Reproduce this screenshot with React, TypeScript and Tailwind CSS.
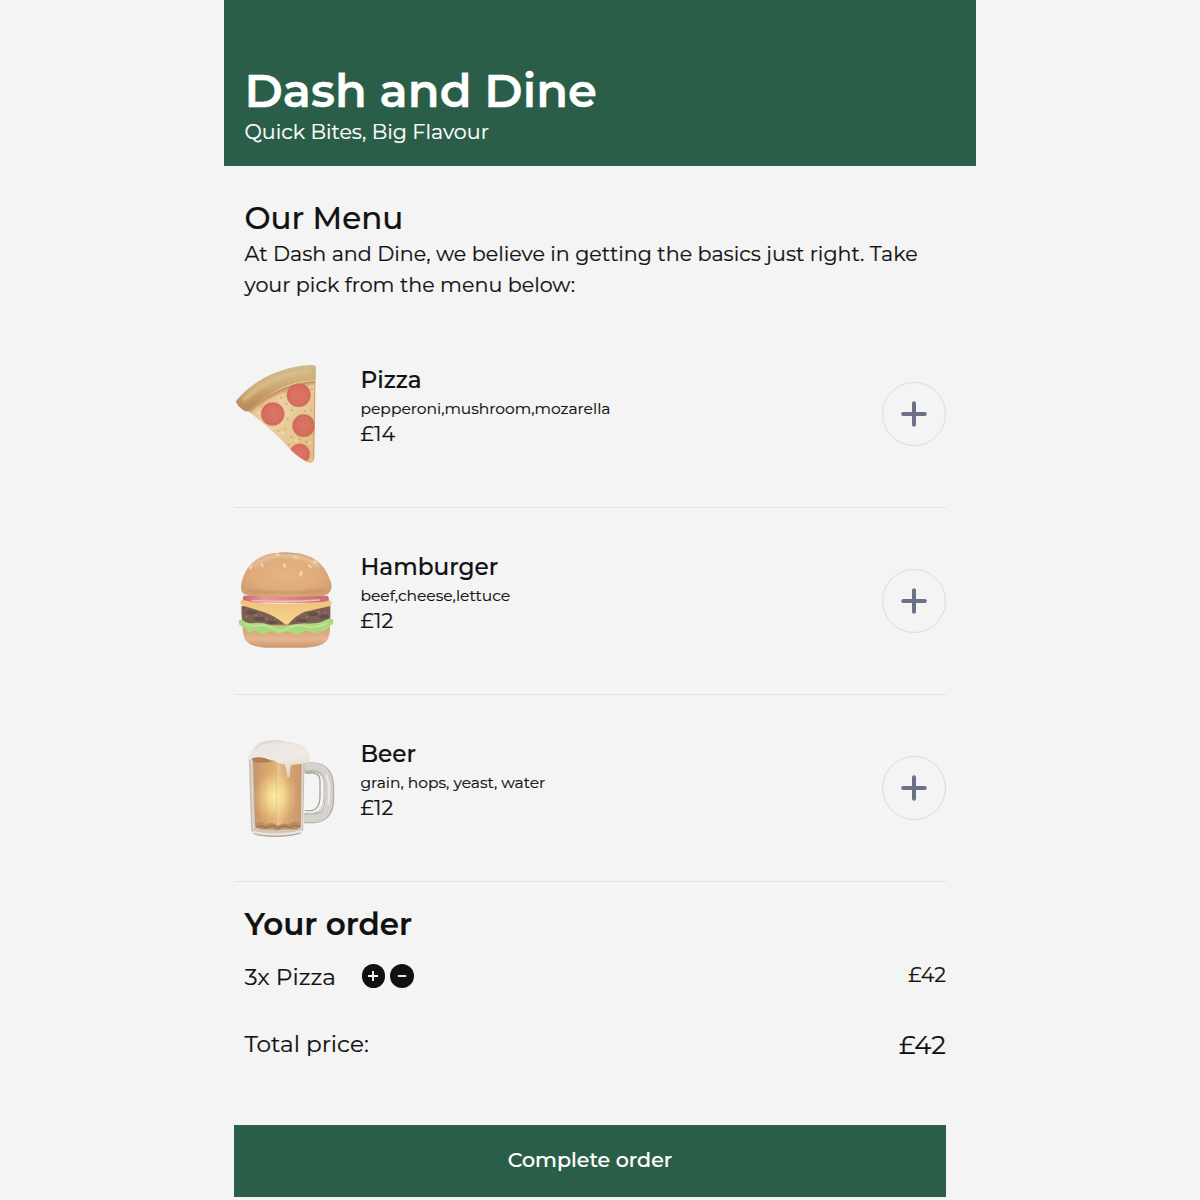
import type { ReactNode } from "react";

function PizzaIcon() {
  return (
    <svg viewBox="27 36 312 312" className="size-[104px] shrink-0" aria-hidden="true">
      <defs>
        <linearGradient id="crust" x1="0.35" y1="0.1" x2="0.52" y2="0.85">
          <stop offset="0" stopColor="#cdb88c" />
          <stop offset="0.4" stopColor="#d2b07a" />
          <stop offset="0.75" stopColor="#c0965f" />
          <stop offset="1" stopColor="#bb8a5b" />
        </linearGradient>
        <linearGradient id="cheese" x1="0" y1="0" x2="1" y2="0.8">
          <stop offset="0" stopColor="#e4c08c" />
          <stop offset="0.5" stopColor="#ebd0a0" />
          <stop offset="1" stopColor="#e2bc83" />
        </linearGradient>
        <radialGradient id="pepperoni">
          <stop offset="0" stopColor="#da7666" />
          <stop offset="0.75" stopColor="#d76e60" />
          <stop offset="1" stopColor="#cb6357" />
        </radialGradient>
        <clipPath id="slice">
          <path d="M70 183C130 126 199 97 271 93L267 327Q264 340 251 337Q220 324 195 297Q150 247 70 183Z" />
        </clipPath>
        <filter id="pizzaSoft"><feGaussianBlur stdDeviation="4" /></filter>
        <filter id="pizzaEdge"><feGaussianBlur stdDeviation="1.8" /></filter>
      </defs>
      <g filter="url(#pizzaEdge)">
        <path d="M66 180C130 124 199 93 272 91L268 327Q265 341 251 338Q220 324 195 297Q150 247 66 180Z" fill="url(#cheese)" />
        <g clipPath="url(#slice)">
          <path d="M62 188C130 126 199 98 276 92" fill="none" stroke="#c38d57" strokeWidth="16" filter="url(#pizzaSoft)" />
          <path d="M271 95L267 328" stroke="#ce9b62" strokeWidth="5" />
          <g fill="url(#pepperoni)" stroke="#dc9a6c" strokeWidth="2">
            <circle cx="221" cy="135" r="36" />
            <circle cx="143" cy="192" r="35" />
            <circle cx="236" cy="227" r="34" />
            <circle cx="224" cy="312" r="31" />
          </g>
          <g fill="#d7a26b">
            <circle cx="178" cy="127" r="3" /><circle cx="169" cy="143" r="3" /><circle cx="185" cy="162" r="3" />
            <circle cx="201" cy="180" r="3" /><circle cx="188" cy="207" r="3" /><circle cx="181" cy="238" r="3" />
            <circle cx="160" cy="242" r="3" /><circle cx="199" cy="260" r="3" /><circle cx="225" cy="268" r="3" />
            <circle cx="245" cy="276" r="3" /><circle cx="259" cy="181" r="3" /><circle cx="240" cy="183" r="3" />
            <circle cx="261" cy="117" r="3" /><circle cx="109" cy="169" r="3" /><circle cx="191" cy="284" r="3" />
          </g>
          <g fill="#eedcb8">
            <circle cx="166" cy="151" r="4" /><circle cx="101" cy="189" r="4" /><circle cx="190" cy="193" r="4" />
            <circle cx="172" cy="250" r="4" /><circle cx="255" cy="279" r="4" /><circle cx="213" cy="271" r="4" />
          </g>
        </g>
        <path d="M35 151C85 91 164 50 257 45Q272 44 273 52L272 91C190 94 130 127 70 184Q61 187 51 178Q37 168 33 157Q32 154 35 151Z" fill="url(#crust)" />
        <path d="M55 151C103 104 173 70 258 62" fill="none" stroke="#d8bf8b" strokeWidth="11" filter="url(#pizzaSoft)" />
      </g>
    </svg>
  );
}

function BurgerIcon() {
  return (
    <svg viewBox="27 27 312 312" className="size-[104px] shrink-0" aria-hidden="true">
      <defs>
        <radialGradient id="bunTop" cx="0.49" cy="0.5" r="0.62">
          <stop offset="0" stopColor="#e4b485" />
          <stop offset="0.6" stopColor="#dfab79" />
          <stop offset="1" stopColor="#d09c6e" />
        </radialGradient>
        <linearGradient id="bunBottom" x1="0" y1="0" x2="0" y2="1">
          <stop offset="0.2" stopColor="#d7a278" />
          <stop offset="0.65" stopColor="#e4b58e" />
          <stop offset="1" stopColor="#c9966e" />
        </linearGradient>
        <linearGradient id="tomato" gradientUnits="userSpaceOnUse" x1="55" y1="0" x2="310" y2="0">
          <stop offset="0" stopColor="#c9686a" />
          <stop offset="0.25" stopColor="#e89a9b" />
          <stop offset="0.6" stopColor="#dc8083" />
          <stop offset="1" stopColor="#cb6b6e" />
        </linearGradient>
        <linearGradient id="cheddar" x1="0" y1="0" x2="0" y2="1">
          <stop offset="0" stopColor="#efc27a" />
          <stop offset="1" stopColor="#f6d58e" />
        </linearGradient>
        <filter id="burgerEdge"><feGaussianBlur stdDeviation="1.8" /></filter>
        <filter id="burgerSoft"><feGaussianBlur stdDeviation="4" /></filter>
      </defs>
      <g filter="url(#burgerEdge)">
        <path d="M53 251H314Q318 285 304 304Q288 322 240 323H128Q76 322 61 300Q52 283 53 251Z" fill="url(#bunBottom)" />
        <path d="M49 199Q100 190 182 196Q270 190 316 199V230Q316 247 302 253L66 255Q50 247 50 230Z" fill="#7b6154" />
        <g fill="#655046">
          <ellipse cx="79" cy="217" rx="17" ry="6" /><ellipse cx="105" cy="237" rx="20" ry="6" />
          <ellipse cx="142" cy="247" rx="15" ry="5" /><ellipse cx="230" cy="242" rx="18" ry="5" />
          <ellipse cx="264" cy="222" rx="16" ry="6" /><ellipse cx="297" cy="230" rx="15" ry="6" />
        </g>
        <g fill="#94765f">
          <circle cx="65" cy="230" r="4" /><circle cx="93" cy="225" r="4" /><circle cx="124" cy="236" r="4" />
          <circle cx="151" cy="240" r="3" /><circle cx="246" cy="231" r="4" /><circle cx="281" cy="216" r="4" />
          <circle cx="302" cy="217" r="3" /><circle cx="221" cy="249" r="4" />
        </g>
        <path d="M43 240Q51 235 61 246Q78 253 93 248Q116 247 132 254Q160 261 183 258Q212 252 240 250Q279 253 302 240Q319 232 323 239Q328 245 323 253Q312 257 307 267Q298 276 283 274Q273 283 258 277Q244 268 232 277Q219 289 205 279Q190 273 177 276Q161 287 147 276Q131 270 122 280Q108 287 97 275Q90 267 81 277Q67 282 60 265Q55 257 45 257Q38 247 43 240Z" fill="#abda7b" />
        <path d="M60 251Q83 261 101 257T145 266T191 265T242 259T304 250" fill="none" stroke="#bfe697" strokeWidth="5" />
        <path d="M56 167Q180 157 307 167Q314 172 311 188H57Q51 178 56 167Z" fill="url(#tomato)" />
        <path d="M80 181Q180 187 285 180" fill="none" stroke="#f0bfbe" strokeWidth="4" />
        <path d="M50 179Q77 184 99 189Q187 194 290 187L315 181Q322 186 318 197Q273 207 239 215Q210 228 191 251Q183 257 176 250Q150 228 116 216L49 196Q43 186 50 179Z" fill="url(#cheddar)" />
        <path d="M49 151C46 134 51 116 64 91C86 55 126 40 155 39C176 34 193 38 210 39C257 43 296 65 316 121Q326 151 307 163Q270 171 184 171T64 164Q51 161 49 151Z" fill="url(#bunTop)" />
        <path d="M68 151Q181 170 303 149" fill="none" stroke="#c99364" strokeWidth="9" filter="url(#burgerSoft)" />
        <path d="M86 78Q125 43 184 47Q246 47 282 82" fill="none" stroke="#e4c29c" strokeWidth="12" filter="url(#burgerSoft)" />
        <g fill="#efd3ad">
          <ellipse cx="228" cy="101" rx="5" ry="9" transform="rotate(22 228 101)" />
          <ellipse cx="178" cy="77" rx="4" ry="7" transform="rotate(-15 178 77)" />
          <ellipse cx="111" cy="76" rx="4" ry="7" transform="rotate(-36 111 76)" />
          <ellipse cx="78" cy="82" rx="4" ry="8" transform="rotate(34 78 82)" />
          <ellipse cx="158" cy="44" rx="7" ry="4" transform="rotate(15 158 44)" />
          <ellipse cx="212" cy="52" rx="8" ry="4" transform="rotate(24 212 52)" />
          <ellipse cx="255" cy="79" rx="8" ry="3" transform="rotate(37 255 79)" />
          <ellipse cx="270" cy="66" rx="7" ry="4" transform="rotate(28 270 66)" />
        </g>
      </g>
    </svg>
  );
}

function BeerIcon() {
  return (
    <svg viewBox="27 24 312 312" className="size-[104px] shrink-0" aria-hidden="true">
      <defs>
        <linearGradient id="ale" x1="0" y1="0" x2="1" y2="0">
          <stop offset="0" stopColor="#c39369" />
          <stop offset="0.22" stopColor="#d7a36e" />
          <stop offset="0.46" stopColor="#dfae72" />
          <stop offset="0.5" stopColor="#ebc490" />
          <stop offset="0.7" stopColor="#daa671" />
          <stop offset="1" stopColor="#c9976c" />
        </linearGradient>
        <radialGradient id="glow">
          <stop offset="0" stopColor="#fdec9d" />
          <stop offset="0.4" stopColor="#f7df94" stopOpacity="0.8" />
          <stop offset="1" stopColor="#eec987" stopOpacity="0" />
        </radialGradient>
        <linearGradient id="foam" x1="0" y1="0" x2="0.3" y2="1">
          <stop offset="0" stopColor="#d6cfc9" />
          <stop offset="0.3" stopColor="#ebe6e1" />
          <stop offset="0.65" stopColor="#eee9e4" />
          <stop offset="1" stopColor="#e3d4c4" />
        </linearGradient>
        <filter id="beerEdge"><feGaussianBlur stdDeviation="1.8" /></filter>
      </defs>
      <g filter="url(#beerEdge)">
        <path d="M236 120Q267 114 288 123Q313 137 313 181V218Q311 266 269 271H237" fill="none" stroke="#b1aca6" strokeWidth="29" />
        <path d="M237 119Q267 112 289 122Q312 136 312 181V217Q310 267 269 271H237" fill="none" stroke="#d6d3cf" strokeWidth="23" />
        <path d="M240 135H264Q284 136 285 158V208Q284 243 260 248H239" fill="none" stroke="#a9a39c" strokeWidth="4" />
        <path d="M240 127H266Q293 128 297 158V211Q294 250 264 256H239" fill="none" stroke="#c2bdb7" strokeWidth="3" />
        <path d="M304 140Q317 170 310 231" fill="none" stroke="#eceae8" strokeWidth="5" />
        <path d="M73 92L80 308Q88 324 153 325Q225 324 233 306L237 103Z" fill="#d0c7bc" stroke="#b3aaa1" strokeWidth="2" />
        <path d="M84 92L90 286Q95 300 153 302Q216 301 228 286L230 103Z" fill="url(#ale)" />
        <ellipse cx="151" cy="206" rx="66" ry="83" fill="url(#glow)" />
        <path d="M121 105L123 286M155 105V287M195 105L193 284" stroke="#c79a69" strokeOpacity="0.3" strokeWidth="3" />
        <path d="M91 287Q106 276 124 290Q142 279 159 293Q174 282 191 289Q210 273 227 286V296Q218 307 194 304Q176 302 157 307Q138 302 119 305Q97 304 91 295Z" fill="#bd8b5e" />
        <path d="M92 299Q106 289 123 299Q142 288 158 300Q178 290 193 299Q213 289 226 296" fill="none" stroke="#8f694b" strokeWidth="3" />
        <path d="M84 311Q112 319 153 319T231 309" fill="none" stroke="#ebe5dd" strokeWidth="6" />
        <path d="M84 317Q115 327 160 325T230 315" fill="none" stroke="#9a938b" strokeWidth="2" />
        <path d="M79 97L85 302M233 108L230 302" stroke="#ded8d1" strokeWidth="4" />
        <path d="M69 88Q78 70 93 53Q107 38 127 39Q158 31 186 41Q219 41 242 60Q259 77 253 103L232 108L201 110Q194 112 196 139Q192 154 186 146Q184 124 179 109Q157 107 146 97Q122 84 101 88L75 96Z" fill="url(#foam)" />
        <path d="M80 91Q113 82 142 101Q114 106 86 102Z" fill="#b17e50" />
        <path d="M104 58Q139 44 178 50Q222 55 234 85" fill="none" stroke="#f4f1ed" strokeOpacity="0.4" strokeWidth="10" />
      </g>
    </svg>
  );
}

type MenuItem = {
  name: string;
  ingredients: string;
  price: string;
  icon: ReactNode;
};

const menu: MenuItem[] = [
  { name: "Pizza", ingredients: "pepperoni,mushroom,mozarella", price: "£14", icon: <PizzaIcon /> },
  { name: "Hamburger", ingredients: "beef,cheese,lettuce", price: "£12", icon: <BurgerIcon /> },
  { name: "Beer", ingredients: "grain, hops, yeast, water", price: "£12", icon: <BeerIcon /> },
];

function MenuRow({ item }: { item: MenuItem }) {
  return (
    <li className="flex h-[187px] items-center border-b border-[#e2e2e2]">
      {item.icon}
      <div className="ml-[22.5px] flex-1 pb-[19px]">
        <h3 className="text-[23.2px] leading-[32px] font-medium">{item.name}</h3>
        <p className="text-[15.5px] leading-[26px]">{item.ingredients}</p>
        <p className="text-[20.65px] leading-[24px]">{item.price}</p>
      </div>
      <button
        aria-label={`Add ${item.name}`}
        className="mb-px flex size-[64px] items-center justify-center rounded-full border border-[#dcdcde]"
      >
        <svg viewBox="0 0 26 26" className="size-[26px]" aria-hidden="true">
          <path d="M13 2.2V23.8M2.2 13H23.8" stroke="#6b7288" strokeWidth="4" strokeLinecap="round" />
        </svg>
      </button>
    </li>
  );
}

export default function App() {
  return (
    <div className="h-[1200px] overflow-hidden bg-[#f4f4f4] font-['Montserrat','Inter',sans-serif] text-[#111111] [-webkit-text-stroke:0.2px]">
      <main className="mx-auto w-[752px]">
        <header className="flex h-[166px] flex-col bg-[#2a5e48] pt-[62px] pl-[20.5px] text-white">
          <h1 className="text-[46.45px] leading-[58px] font-semibold whitespace-nowrap [-webkit-text-stroke:0.4px]">Dash and Dine</h1>
          <p className="text-[20.65px] leading-[24px] whitespace-nowrap">Quick Bites, Big Flavour</p>
        </header>
        <section className="h-[155px] pt-[34px] pl-[20.5px]">
          <h2 className="text-[31px] leading-[36px] font-medium">Our Menu</h2>
          <p className="pt-[1.5px] text-[20.65px] leading-[31px] whitespace-nowrap">
            At Dash and Dine, we believe in getting the basics just right. Take
            <br />
            your pick from the menu below:
          </p>
        </section>
        <ul className="mr-[30px] ml-[10px]">
          {menu.map((item) => (
            <MenuRow key={item.name} item={item} />
          ))}
        </ul>
        <section className="pt-[22px] pr-[30px] pl-[20.5px]">
          <h2 className="text-[31px] leading-[40px] font-semibold">Your order</h2>
          <div className="mt-[18px] flex h-[30px] items-center">
            <span className="w-[117px] text-[23.2px] leading-[30px]">3x Pizza</span>
            <div className="flex gap-[5px] pb-[2px]">
              <button aria-label="Add one Pizza" className="flex size-[23.5px] items-center justify-center rounded-full bg-[#111]">
                <svg viewBox="0 0 10 10" className="size-[10px]"><path d="M5 0V10M0 5H10" stroke="#f4f4f4" strokeWidth="1.9" /></svg>
              </button>
              <button aria-label="Remove one Pizza" className="flex size-[23.5px] items-center justify-center rounded-full bg-[#111]">
                <svg viewBox="0 0 10 10" className="size-[10px]"><path d="M0.8 5H9.2" stroke="#f4f4f4" strokeWidth="1.9" /></svg>
              </button>
            </div>
            <span className="ml-auto pb-[5px] text-[20.65px] leading-[24px]">£42</span>
          </div>
          <div className="mt-[37px] flex h-[32px] items-center justify-between">
            <span className="pb-[2px] text-[23.2px] leading-[32px]">Total price:</span>
            <span className="text-[25.8px] leading-[32px]">£42</span>
          </div>
        </section>
        <button className="mt-[64px] mr-[30px] ml-[10px] flex h-[72px] w-[712px] items-center justify-center bg-[#2a5e48] pb-[2px] text-[20.65px] leading-[30px] font-medium text-white">
          Complete order
        </button>
      </main>
    </div>
  );
}
